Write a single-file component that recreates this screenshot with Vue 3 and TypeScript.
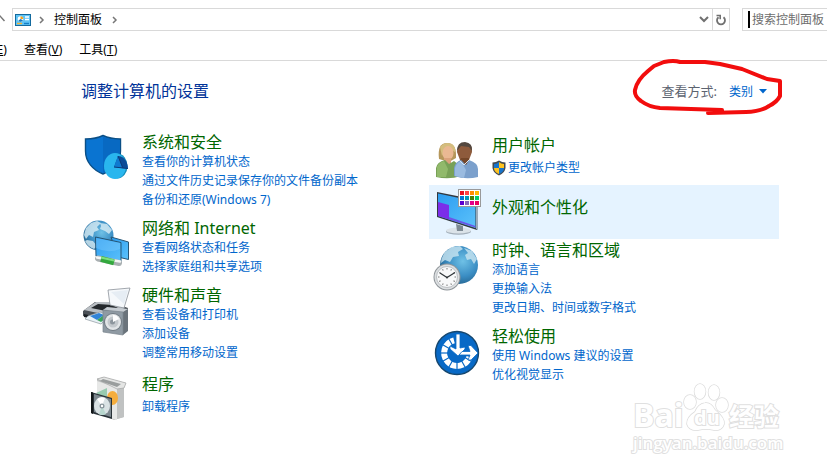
<script setup lang="ts">
import { ref } from 'vue'

interface Category {
  icon: string
  title: string
  links: string[]
  shield?: boolean
  active?: boolean
}

const columns: Category[][] = [
  [
    { icon: 'security', title: '系统和安全', links: ['查看你的计算机状态', '通过文件历史记录保存你的文件备份副本', '备份和还原(Windows 7)'] },
    { icon: 'network', title: '网络和 Internet', links: ['查看网络状态和任务', '选择家庭组和共享选项'] },
    { icon: 'hardware', title: '硬件和声音', links: ['查看设备和打印机', '添加设备', '调整常用移动设置'] },
    { icon: 'programs', title: '程序', links: ['卸载程序'] },
  ],
  [
    { icon: 'users', title: '用户帐户', links: ['更改帐户类型'], shield: true },
    { icon: 'display', title: '外观和个性化', links: [], active: true },
    { icon: 'clock', title: '时钟、语言和区域', links: ['添加语言', '更换输入法', '更改日期、时间或数字格式'] },
    { icon: 'access', title: '轻松使用', links: ['使用 Windows 建议的设置', '优化视觉显示'] },
  ],
]

const swatches: string[][] = [
  ['#e81123', '#ff4343', '#ff8c00', '#ffb900'],
  ['#0078d7', '#0099bc', '#498205', '#00cc6a'],
  ['#5c00d0', '#8764b8', '#e3008c', '#ea005e'],
]

const menus = [
  { name: '编辑', key: 'E' },
  { name: '查看', key: 'V' },
  { name: '工具', key: 'T' },
]

const ringTicks = [90, 120, 150, 180, 210, 240, 270, 300, 330]
const hours = [0, 30, 60, 90, 120, 150, 180, 210, 240, 270, 300, 330]
const query = ref('')
const view = ref('category')
</script>

<template>
  <div class="window">
    <header class="nav">
      <button class="up" type="button" aria-label="向上">
        <svg width="8" height="14" viewBox="0 0 8 14"><path d="M-2 5 0 3 4.500 8" fill="none" stroke="#777" stroke-width="1.500" /></svg>
      </button>
      <div class="address">
        <svg class="cp" width="16" height="12" viewBox="0 0 16 12">
          <rect x=".5" y=".5" width="15" height="11" fill="#5fc3f4" stroke="#136a9e" />
          <circle cx="5.500" cy="5" r="2.800" fill="#fff" />
          <path d="M5.500 5V2.200A2.800 2.800 0 0 1 8.300 5Z" fill="#f5a11c" />
          <path d="M5.500 5 3.300 6.800A2.800 2.800 0 0 0 8 6.200Z" fill="#1677bd" />
          <path d="M10 3h4M10 5.500h4" stroke="#fff" stroke-width="1.400" />
          <path d="M2 9.500h5" stroke="#f9b233" stroke-width="1.400" />
          <path d="M9 9.500h5" stroke="#147ec5" stroke-width="1.400" />
        </svg>
        <svg class="chev" width="6" height="8" viewBox="0 0 6 8"><path d="m1 1 3 3-3 3" fill="none" stroke="#777" stroke-width="1.500" /></svg>
        <a class="crumb" href="#">控制面板</a>
        <svg class="chev" width="6" height="8" viewBox="0 0 6 8"><path d="m1 1 3 3-3 3" fill="none" stroke="#777" stroke-width="1.500" /></svg>
        <button class="drop" type="button" aria-label="历史记录">
          <svg width="10" height="7" viewBox="0 0 10 7"><path d="m1 1 4 4 4-4" fill="none" stroke="#707070" stroke-width="2" /></svg>
        </button>
        <button class="refresh" type="button" aria-label="刷新">
          <svg width="12" height="14" viewBox="0 0 12 14">
            <path d="M3.500 4.200A4 4 0 1 0 8.500 4.200" fill="none" stroke="#707070" stroke-width="1.800" />
            <path d="M1.500 2.500H5.200V6.200" fill="none" stroke="#707070" stroke-width="1.600" />
          </svg>
        </button>
      </div>
      <div class="search">
        <span class="caret"></span>
        <input v-model="query" type="text" placeholder="搜索控制面板" aria-label="搜索控制面板" />
      </div>
    </header>

    <nav class="menu">
      <button v-for="m in menus" :key="m.key" type="button">{{ m.name }}(<u>{{ m.key }}</u>)</button>
    </nav>

    <main class="body">
      <div class="head">
        <h1>调整计算机的设置</h1>
        <div class="view">
          <label for="view">查看方式:</label>
          <select id="view" v-model="view"><option value="category">类别</option></select>
          <svg width="8" height="5" viewBox="0 0 8 5"><path d="M0 0h8L4 4.500Z" fill="#0066cc" /></svg>
        </div>
      </div>

      <div class="grid">
        <div v-for="(col, i) in columns" :key="i" class="col">
          <section
            v-for="c in col"
            :key="c.title"
            class="item"
            :class="{ single: c.links.length === 1, bare: c.links.length === 0, active: c.active }"
          >
            <svg class="icon" width="48" height="48" viewBox="0 0 48 48" aria-hidden="true">
              <defs>
                <linearGradient :id="'blue-' + c.icon" x1="0" y1="0" x2="1" y2="1">
                  <stop offset="0" stop-color="#2b9cf0" /><stop offset="1" stop-color="#5cc2fb" />
                </linearGradient>
                <radialGradient :id="'globe-' + c.icon" cx=".6" cy=".4" r=".65">
                  <stop offset="0" stop-color="#6fc1e6" /><stop offset=".6" stop-color="#3b8ec4" /><stop offset="1" stop-color="#25648f" />
                </radialGradient>
              </defs>

              <template v-if="c.icon === 'security'">
                <path d="M2.500 5C10 5 15 4 20 1.500 25 4 30 5 37.500 5V17C37.500 28 30 36 20 40 10 36 2.500 28 2.500 17Z" fill="#0a74d1" stroke="#0b4f86" stroke-width="1.400" />
                <path d="M20 2.500C25 5 30 6 36.800 6V17C36.800 27 30 35 20 39Z" fill="#0869c2" />
                <ellipse cx="34.500" cy="32" rx="10" ry="12.500" fill="#128bb8" />
                <ellipse cx="32" cy="32" rx="11" ry="13" fill="#29b6ee" />
                <path d="M35 22C41 22 45 28 45 35L31 33Z" fill="#0b4b97" />
                <path d="m35 22-4 11 8 .5Z" fill="#0f7ad0" />
                <path d="m31 33 14 1.500M35 22l5 12" stroke="#0c3c7a" />
              </template>

              <template v-else-if="c.icon === 'network'">
                <circle cx="15.500" cy="15.500" r="15" fill="url(#globe-network)" />
                <path d="M3 8 8 3l6-2 4 2-4 4 2 3-5 2-1 5-4-2-3 4-2-4Z M17 3l7 1 5 6-3 4-4-3-5-2 1-3Z M4 20l6 1 4 5-3 3Q5 27 2 21Z" fill="#d9edf5" opacity=".8" />
                <path d="M28 17 45.500 22V39.500L35 37Z" fill="url(#blue-network)" stroke="#275675" />
                <path d="M12.500 17 38 22.500V43L13 36Z" fill="url(#blue-network)" stroke="#275675" />
                <path d="M13 18 37 23V29Q25 34 13 28Z" fill="#8bd1ff" opacity=".35" />
                <path d="m15 38.500 21 4.500" stroke="#a9b0b2" stroke-width="6" stroke-linecap="round" />
                <path d="m14 37.500 23 4" stroke="#f3f5f5" stroke-width="2.500" stroke-linecap="round" />
                <path d="m18 38.800 13 3.500" stroke="#34a83e" stroke-width="6" />
                <path d="m18 37.500 13 3" stroke="#7ee080" stroke-width="2" />
              </template>

              <template v-else-if="c.icon === 'hardware'">
                <path d="m0 24 12-9 16 0 17 6-3 9-17 7L0 29Z" fill="#4a5056" />
                <path d="m1 23 12-8h15l14 6-18 7Z" fill="#b9bec3" />
                <path d="m8 21 7-4 14 1 6 3-12 3Z" fill="#24282c" />
                <path d="m25 3 22-2-6 20-14-3Z" fill="#f5f8fb" stroke="#8b9299" stroke-width=".8" />
                <path d="M28 5 45 3l-4 14Z" fill="#e6edf4" />
                <path d="m1 27 22 5v4L1 30Z" fill="#1c2125" />
                <path d="m5 29 12-4 10 4-9 8L2 32Z" fill="#e9f2f7" stroke="#8c969d" stroke-width=".7" />
                <path d="m7 29 9-3 5 2-7 5Z" fill="#3183d8" /><path d="m14 33 7-5 4 2-7 5Z" fill="#3da55e" />
                <path d="m20 23 4-3 21 2-5 4Z" fill="#c5cbd1" /><path d="m40 25 5-3v22l-5 4Z" fill="#6a737b" />
                <path d="m20 23 20 2v23l-20-3Z" fill="#8f9aa3" stroke="#7a848d" stroke-width=".7" />
                <circle cx="30" cy="35" r="9" fill="#727c84" /><circle cx="30" cy="35" r="8" fill="#e2e5e7" />
                <circle cx="30" cy="35" r="5.500" fill="#c3c8cc" /><circle cx="29.500" cy="35" r="2.500" fill="#8d969d" />
                <path d="M30 28a7 7 0 0 1 6 4l-6 3Z" fill="#fff" />
              </template>

              <template v-else-if="c.icon === 'programs'">
                <path d="m14 6 6-2 23 6-2 5v29l-10 3-17-7Z" fill="#c3c5c5" />
                <path d="m14 8 20 7v32l-20-6Z" fill="#e7e8e7" />
                <path d="m34 15 7-2v31l-7 2Z" fill="#c0c2c2" />
                <path d="M14 6 21 4l22 6-2 5-7 1Z" fill="#e4e5e4" stroke="#a3a5a5" stroke-width=".7" />
                <path d="m20 6 18 5-4 3-17-6Z" fill="#999d9d" />
                <path d="m13 20 11-5v13Z" fill="#98cbb0" />
                <ellipse cx="29.500" cy="25" rx="5.500" ry="7" fill="#f5ad3d" />
                <path d="m8 19 21 6v21L8 40Z" fill="#293238" />
                <path d="m11 21 17 5v18l-17-5Z" fill="#7d888f" />
                <ellipse cx="19" cy="33" rx="8" ry="9" fill="#d9e2e4" />
                <path d="m19 33-5-7q4-3 8-1Z" fill="#fff" /><path d="m19 33 4 8q-4 2-7 0Z" fill="#b8d7cf" />
                <circle cx="19" cy="33" r="2.500" fill="#87949a" /><circle cx="19" cy="33" r="1.200" fill="#fff" />
                <path d="m8 19 2 .5V41l-2-1Z" fill="#121719" />
              </template>

              <template v-else-if="c.icon === 'users'">
                <path d="M6 25Q4 9 14 9q10 0 9 15l-7 4Z" fill="#b6975b" />
                <path d="M7 13Q12 7 19 10q4 3 3 8l-8-4-5 8Z" fill="#d4bd7e" />
                <ellipse cx="15" cy="19" rx="5.500" ry="7" fill="#eab893" />
                <path d="M11 24h7v6h-7Z" fill="#dba27c" />
                <path d="M3 43V34q1-6 9-8l4 4 5-3q7 4 7 15-12 4-25 1Z" fill="#78a157" />
                <path d="M4 33q2-5 7-6l4 8-2 8H4Z" fill="#91b96b" />
                <path d="M24 18q0-9 8-9 8 1 7 9l-3 8h-9Z" fill="#8e5b3c" />
                <path d="M24 17q0-9 8-9 8 1 7 9l-3-4-8-1Z" fill="#54483f" />
                <path d="M28 24h8v6l-5 3-5-4Z" fill="#754729" />
                <path d="M21 42V34q1-6 7-8l5 5 3-5q9 3 9 9v8q-12 3-24-1Z" fill="#7ba0cc" />
                <path d="M22 34q1-5 6-7l5 9-2 8-9-2Z" fill="#9abbe0" />
                <path d="m27 27 4 4 5-5" fill="none" stroke="#d5e4f3" />
              </template>

              <template v-else-if="c.icon === 'display'">
                <ellipse cx="25.500" cy="43.500" rx="12.500" ry="3.200" fill="#a3afba" />
                <ellipse cx="25.500" cy="42.500" rx="12.500" ry="3" fill="#dbe3e9" />
                <path d="m23 36 7 2v5h-6Z" fill="#7c8993" />
                <path d="m4 4 40 8v30L4 29Z" fill="#31383f" />
                <path d="m5 5.500 37.500 8V40L5 28Z" fill="url(#blue-display)" />
                <path d="m5 14 11 3v14.500L5 28Z" fill="#7b2de9" />
                <path d="m16 31.500 26.500 8V38L16 29Z" fill="#6a56e7" />
                <path d="m43 12 2 1v29l-2-1Z" fill="#9aabb9" />
                <rect x="25.500" y="1.500" width="22" height="17" fill="#fff" stroke="#999" />
                <g v-for="(row, y) in swatches" :key="y">
                  <rect v-for="(s, x) in row" :key="s" :x="27 + x * 5" :y="3 + y * 5" width="4" height="4" :fill="s" />
                </g>
              </template>

              <template v-else-if="c.icon === 'clock'">
                <circle cx="26" cy="23" r="19" fill="url(#globe-clock)" />
                <path d="m12 10 7-5 8-1 3 3-5 3 1 4-6 1-3 5-5-2-4 3Q8 16 12 10Z M31 6l8 3 5 8-3 5-3-5-4 1-2-5 3-2Z" fill="#cae6f1" opacity=".8" />
                <circle cx="14" cy="35" r="13.500" fill="#8e9499" />
                <circle cx="14" cy="35" r="12.500" fill="#dcdfe1" />
                <circle cx="14" cy="35" r="10.500" fill="#f8f9fa" stroke="#a8adb1" stroke-width=".7" />
                <path v-for="h in hours" :key="h" d="M14 26v1.500" stroke="#777" :transform="`rotate(${h} 14 35)`" />
                <path d="m7 31 7 4.500 8-5" fill="none" stroke="#30363a" stroke-width="1.200" />
                <circle cx="14" cy="35.500" r="1" fill="#30363a" />
              </template>

              <template v-else>
                <circle cx="24" cy="25" r="21.500" fill="#0869c6" stroke="#16476f" stroke-width="1.400" />
                <path d="M21 12.300A13 13 0 1 0 36.500 29" fill="none" stroke="#fff" stroke-width="6" />
                <path v-for="t in ringTicks" :key="t" d="M24 8v8" stroke="#0869c6" stroke-width="1.200" :transform="`rotate(${t} 24 25)`" />
                <path d="M23 6h4v14l5-1v2l-7 7-8-7v-3l6 3Z" fill="#fff" stroke="#0869c6" stroke-width=".8" />
                <path d="M29 23.500h8l-2-6h3l7 7.500-7 7h-3l2-5h-11Z" fill="#fff" stroke="#0869c6" stroke-width=".8" />
              </template>
            </svg>
            <div class="text">
              <h2><a href="#">{{ c.title }}</a></h2>
              <ul v-if="c.links.length">
                <li v-for="l in c.links" :key="l">
                  <svg v-if="c.shield" width="14" height="16" viewBox="0 0 14 16">
                    <path d="M7 .5Q10 2.500 13.500 2.500V8Q13 13 7 15.500 1 13 .5 8V2.500Q4 2.500 7 .5Z" fill="#454b51" />
                    <path d="M7 2v6H2V4q3 0 5-2Z" fill="#1674cc" /><path d="M7 2v6h5V4Q9 4 7 2Z" fill="#ffc320" />
                    <path d="M7 8v6Q2 12 2 8Z" fill="#ffc320" /><path d="M7 8v6q5-2 5-6Z" fill="#1674cc" />
                  </svg>
                  <a href="#">{{ l }}</a>
                </li>
              </ul>
            </div>
          </section>
        </div>
      </div>
    </main>

    <svg class="mark" width="154" height="58" viewBox="0 0 154 58" aria-hidden="true">
      <path d="M34 4 24 8 18 13Q7 22 5 32 4 38 11 43 19 49 30 50L92 52M34 4Q44 2 50 4H75L90 6 112 11 137 21 150 23V38Q147 44 139 48 130 54 116 54L78 55" fill="none" stroke="#f20d0d" stroke-width="4" stroke-linecap="round" stroke-linejoin="round" />
    </svg>

    <div class="watermark">
      <div class="brand">
        <span class="bai">Bai</span>
        <span class="paw">
          <svg width="46" height="49" viewBox="0 0 46 49">
            <g fill="#fff" stroke="#dcdcdc" stroke-width="1.500">
              <ellipse cx="7" cy="19" rx="6" ry="7" /><ellipse cx="17" cy="8.500" rx="5.500" ry="7.500" />
              <ellipse cx="31" cy="9.500" rx="5.500" ry="7.500" /><ellipse cx="39" cy="22" rx="6" ry="7" />
              <path d="M22 20Q28 19 32 27 42 35 41 41 39 48 31 47 23 45 15 47 6 48 4 41 4 34 12 29 15 21 22 20Z" />
            </g>
          </svg>
          <span class="du">du</span>
        </span>
        <span class="jy">经验</span>
      </div>
      <div class="url">jingyan.baidu.com</div>
    </div>
  </div>
</template>

<style>
body {
  background: #fff;
}
</style>

<style scoped>
.window {
  position: relative;
  min-height: 100vh;
  overflow: hidden;
  font: 12px/19px "Noto Sans", "Noto Sans CJK SC", sans-serif;
  color: #000;
}
button,
input,
select {
  margin: 0;
  padding: 0;
  border: 0;
  background: none;
  font: inherit;
  color: inherit;
}
svg {
  display: block;
  flex: none;
}
a {
  color: inherit;
  text-decoration: none;
}
a:hover {
  text-decoration: underline;
}
.nav {
  display: flex;
  align-items: center;
  padding-top: 8px;
}
.up {
  width: 12px;
}
.address {
  display: flex;
  flex: 1;
  align-items: center;
  box-sizing: border-box;
  height: 23px;
  margin-right: 12px;
  border: 1px solid #d9d9d9;
}
.cp {
  margin: 0 8px 0 2px;
}
.crumb {
  margin: 0 10px 0 9px;
}
.drop {
  display: flex;
  align-items: center;
  justify-content: center;
  width: 16px;
  margin-left: auto;
}
.refresh {
  display: flex;
  align-items: center;
  justify-content: center;
  align-self: stretch;
  width: 17px;
  border-left: 1px solid #d9d9d9;
}
.search {
  display: flex;
  align-items: center;
  box-sizing: border-box;
  width: 85px;
  height: 23px;
  padding-left: 5px;
  border: solid #d9d9d9;
  border-width: 1px 0 1px 1px;
}
.caret {
  width: 2px;
  height: 17px;
  margin-right: 2px;
  background: #000;
}
.search input {
  flex: 1;
  min-width: 0;
  outline: none;
}
.search input::placeholder {
  color: #6d6d6d;
  opacity: 1;
}
.menu {
  display: flex;
  gap: 17px;
  padding: 9px 0 1px;
  border-bottom: 1px solid #d9d9d9;
}
.menu button {
  white-space: nowrap;
}
.menu button:first-child {
  margin-left: -31px;
}
.body {
  padding: 0 48px 0 79px;
}
.head {
  display: flex;
  align-items: center;
  justify-content: space-between;
  height: 60px;
  padding: 0 12px 0 2px;
  margin-bottom: 10px;
}
h1 {
  margin: 0;
  font-size: 16px;
  font-weight: 400;
  color: #003399;
}
.view {
  display: flex;
  align-items: center;
  color: #0066cc;
}
.view label {
  margin-right: 12px;
  font-size: 13px;
  color: #5c6370;
}
.view select {
  margin-right: 5px;
  appearance: none;
}
.grid {
  display: grid;
  grid-template-columns: 1fr 1fr;
}
.item {
  display: flex;
  box-sizing: border-box;
  min-height: 54px;
  padding: 2px 0 8px 4px;
}
.icon {
  height: 48px;
  margin: 1px 11px -5px 0;
  overflow: visible;
}
.text {
  min-width: 0;
}
h2 {
  margin: 0;
  font-size: 16px;
  line-height: 19px;
  font-weight: 400;
  color: #006600;
}
ul {
  margin: 0;
  padding: 0;
  list-style: none;
  color: #0066cc;
}
li {
  display: flex;
  align-items: center;
  gap: 2px;
}
.single .text {
  display: grid;
  align-content: start;
  gap: 3px;
  padding-top: 3px;
}
.bare .text {
  padding-top: 11px;
}
.active {
  background: #e5f3ff;
}
.mark {
  position: absolute;
  top: 58px;
  right: 43px;
}
.watermark {
  position: absolute;
  top: 383px;
  right: 45px;
  width: 149px;
  color: #fff;
  font-family: "Open Sans", "Noto Sans CJK SC", sans-serif;
  font-weight: 700;
  white-space: nowrap;
  paint-order: stroke fill;
  -webkit-text-stroke: 2px #e0e0e0;
}
.brand {
  display: flex;
  align-items: flex-end;
  height: 49px;
}
.bai {
  width: 50px;
  font-size: 32px;
  line-height: 34px;
}
.paw {
  position: relative;
}
.du {
  position: absolute;
  left: 11px;
  bottom: 3px;
  font-size: 20px;
  line-height: 22px;
}
.jy {
  font-size: 25px;
  line-height: 32px;
}
.url {
  padding-top: 1px;
  font-size: 17px;
  line-height: 20px;
  font-weight: 600;
}
</style>
